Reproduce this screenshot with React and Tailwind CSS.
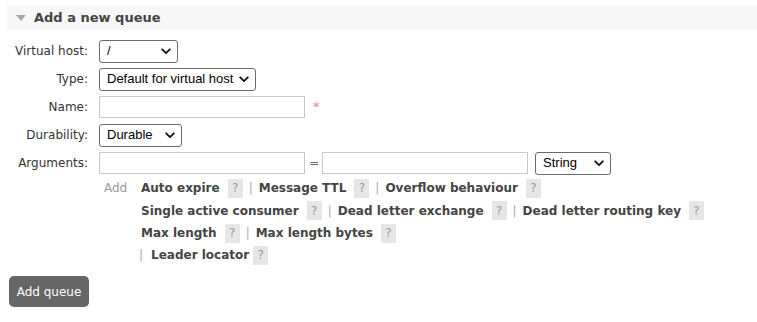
import React from "react";

const Chevron = () => (
  <svg width="10" height="7" viewBox="0 0 10 7" className="shrink-0">
    <path d="M1.2 1.3 L5 5.1 L8.8 1.3" fill="none" stroke="#111" strokeWidth="1.8" strokeLinecap="round" strokeLinejoin="round" />
  </svg>
);

const Select = ({ w, value }) => (
  <div
    className={`${w} h-[23px] border border-[#6b6b6b] rounded-[3px] bg-white flex items-center justify-between pl-[7px] pr-[6px] text-[13px] text-black font-['Liberation_Sans',Arial,sans-serif]`}
  >
    <span>{value}</span>
    <Chevron />
  </div>
);

const Input = () => <div className="w-[206px] h-[22px] border border-[#c8c8c8] bg-white" />;

const Help = ({ tight }) => (
  <span className={`inline-flex items-center justify-center w-[15px] h-[19px] bg-[#e6e6e6] text-[#999] font-normal text-[12px] ${tight ? "ml-[4px]" : "ml-[8px]"}`}>?</span>
);

const Sep = () => <span className="text-[#aaa] font-normal mx-[6px]">|</span>;

const Item = ({ label }) => (
  <span className="inline-flex items-center">
    <span className="font-bold text-[#444]">{label}</span>
    <Help />
  </span>
);

const Row = ({ label, children }) => (
  <div className="flex items-center h-[28px]">
    <div className="w-[88px] text-right text-[12px] text-[#333]">{label}</div>
    <div className="ml-[11px] flex items-center">{children}</div>
  </div>
);

export default function App() {
  return (
    <div className="w-[757px] h-[322px] bg-white font-['DejaVu_Sans',Verdana,sans-serif] text-[12px] text-[#333] overflow-hidden">
      <div className="pt-[5px] pl-[7px]">
        <div className="h-[25px] bg-[#f7f7f7] flex items-center pl-[9px]">
          <svg width="10" height="6" viewBox="0 0 10 6" className="mt-[1px]">
            <path d="M0 0 L10 0 L5 6 Z" fill="#a8a8a8" />
          </svg>
          <span className="ml-[8px] font-bold text-[13px] text-[#444]">Add a new queue</span>
        </div>
      </div>
      <div className="pt-[7px]">
        <Row label="Virtual host:">
          <Select w="w-[79px]" value="/" />
        </Row>
        <Row label="Type:">
          <Select w="w-[157px]" value="Default for virtual host" />
        </Row>
        <Row label="Name:">
          <Input />
          <span className="ml-[8px] text-[#f08090] text-[13px]">*</span>
        </Row>
        <Row label="Durability:">
          <Select w="w-[83px]" value="Durable" />
        </Row>
        <Row label="Arguments:">
          <Input />
          <span className="ml-[4px] mr-[3px] text-[#666]">=</span>
          <Input />
          <span className="ml-[7px]">
            <Select w="w-[76px]" value="String" />
          </span>
        </Row>
        <div className="flex">
          <div className="w-[104px] shrink-0" />
          <div className="w-[37px] shrink-0 text-[#999] h-[22px] flex items-center">Add</div>
          <div className="flex flex-col text-[12px]">
            <div className="flex items-center h-[22px]">
              <Item label="Auto expire" />
              <Sep />
              <Item label="Message TTL" />
              <Sep />
              <Item label="Overflow behaviour" />
            </div>
            <div className="flex items-center h-[23px]">
              <Item label="Single active consumer" />
              <Sep />
              <Item label="Dead letter exchange" />
              <Sep />
              <Item label="Dead letter routing key" />
            </div>
            <div className="flex items-center h-[22px]">
              <Item label="Max length" />
              <Sep />
              <Item label="Max length bytes" />
            </div>
            <div className="flex items-center h-[22px] -ml-[2px]">
              <span className="text-[#aaa] mr-[8px]">|</span>
              <span className="font-bold text-[#444]">Leader locator</span>
              <Help tight />
            </div>
          </div>
        </div>
        <div className="pl-[9px] mt-[10px]">
          <button className="w-[80px] h-[31px] rounded-[5px] bg-[#666] text-white text-[12px]">Add queue</button>
        </div>
      </div>
    </div>
  );
}
